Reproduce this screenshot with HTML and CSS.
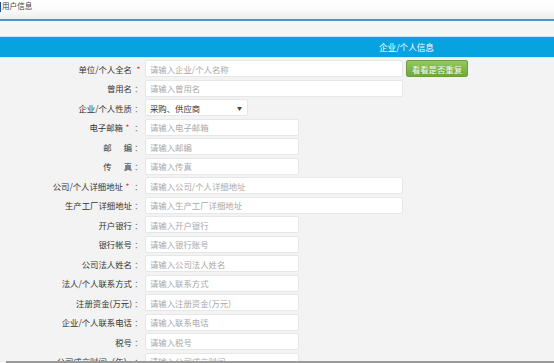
FILE: index.html
```html
<!DOCTYPE html>
<html lang="zh-CN">
<head>
<meta charset="utf-8">
<title>用户信息</title>
<link rel="stylesheet" href="styles.css">
</head>
<body>
<div class="topbar"><span class="caret"></span><span class="page-title">用户信息</span></div>
<div class="gap-strip"></div>
<div class="section-head"><span>企业/个人信息</span></div>
<form class="form">
  <div class="row"><label class="lbl">单位/个人全名<span class="star">*</span></label><input class="ipt long" placeholder="请输入企业/个人名称"><button type="button" class="btn-check">看看是否重复</button></div>
  <div class="row"><label class="lbl">曾用名<span class="colon">：</span></label><input class="ipt long" placeholder="请输入曾用名"></div>
  <div class="row"><label class="lbl">企业/个人性质<span class="colon">：</span></label><div class="select"><span>采购、供应商</span><span class="arrow">▼</span></div></div>
  <div class="row"><label class="lbl">电子邮箱<span class="star">*</span><span class="colon">：</span></label><input class="ipt short" placeholder="请输入电子邮箱"></div>
  <div class="row"><label class="lbl">邮<span class="sp"></span>编<span class="colon">：</span></label><input class="ipt short" placeholder="请输入邮编"></div>
  <div class="row"><label class="lbl">传<span class="sp"></span>真<span class="colon">：</span></label><input class="ipt short" placeholder="请输入传真"></div>
  <div class="row"><label class="lbl">公司/个人详细地址<span class="star">*</span><span class="colon">：</span></label><input class="ipt long" placeholder="请输入公司/个人详细地址"></div>
  <div class="row"><label class="lbl">生产工厂详细地址<span class="colon">：</span></label><input class="ipt long" placeholder="请输入生产工厂详细地址"></div>
  <div class="row"><label class="lbl">开户银行<span class="colon">：</span></label><input class="ipt short" placeholder="请输入开户银行"></div>
  <div class="row"><label class="lbl">银行帐号<span class="colon">：</span></label><input class="ipt short" placeholder="请输入银行账号"></div>
  <div class="row"><label class="lbl">公司法人姓名<span class="colon">：</span></label><input class="ipt short" placeholder="请输入公司法人姓名"></div>
  <div class="row"><label class="lbl">法人/个人联系方式<span class="colon">：</span></label><input class="ipt short" placeholder="请输入联系方式"></div>
  <div class="row"><label class="lbl">注册资金(万元)<span class="colon">：</span></label><input class="ipt short" placeholder="请输入注册资金(万元)"></div>
  <div class="row"><label class="lbl">企业/个人联系电话<span class="colon">：</span></label><input class="ipt short" placeholder="请输入联系电话"></div>
  <div class="row"><label class="lbl">税号<span class="colon">：</span></label><input class="ipt short" placeholder="请输入税号"></div>
  <div class="row"><label class="lbl">公司成立时间（年）<span class="colon">：</span></label><input class="ipt short" placeholder="请输入公司成立时间"></div>
</form>
<div class="hscroll"></div>
</body>
</html>
```
FILE: styles.css
```css
html, body {
  margin: 0;
  padding: 0;
  overflow: hidden;
  background: #f3f3f3;
  font-family: "Noto Sans CJK SC", "Liberation Sans", sans-serif;
  font-size: 8.4px;
  color: #333;
}
.topbar {
  height: 19px;
  background: linear-gradient(#ffffff, #fbfbfb 50%, #ececec);
  border-bottom: 2px solid #4a98c8;
  display: flex;
  align-items: flex-start;
  box-sizing: border-box;
  height: 21px;
}
.caret {
  width: 1px;
  height: 10px;
  margin-top: 2px;
  background: #1d4f8c;
}
.page-title {
  font-size: 7.6px;
  color: #444;
  margin-left: 1px;
  margin-top: 1px;
  line-height: 10px;
}
.gap-strip {
  height: 15px;
  background: #f4f5f5;
  border-bottom: 1px solid #c3eef9;
}
.section-head {
  height: 20px;
  background: #06a3e0;
  border-bottom: 1px solid #bdeefa;
  display: flex;
  align-items: center;
  padding-left: 379px;
  color: #ffffff;
  font-size: 8.6px;
}
.form {
  margin: 0;
  padding-top: 1px;
}
.row {
  height: 19.5px;
  display: flex;
  align-items: center;
}
.lbl {
  width: 141px;
  flex: none;
  text-align: right;
  padding-right: 4px;
  box-sizing: border-box;
  white-space: nowrap;
  color: #333;
  padding-right: 0;
  width: 145px;
}
.star {
  color: #e03a3a;
  display: inline-block;
  width: 9px;
  text-align: center;
}
.colon {
  display: inline-block;
  width: 13px;
  text-align: center;
  color: #777;
}
.row:first-child .star {
  width: 13px;
}
.sp {
  display: inline-block;
  width: 12px;
}
.ipt {
  height: 17px;
  box-sizing: border-box;
  border: 1px solid #e7e7e7;
  border-radius: 2px;
  background: #ffffff;
  padding: 0 4px;
  font-family: inherit;
  font-size: 8.4px;
  color: #333;
  outline: none;
  margin: 0;
}
.ipt::placeholder {
  color: #a9a9a9;
}
.long { width: 258px; }
.short { width: 154px; }
.select {
  width: 103px;
  height: 17px;
  box-sizing: border-box;
  border: 1px solid #e7e7e7;
  border-radius: 2px;
  background: #ffffff;
  display: flex;
  align-items: center;
  justify-content: space-between;
  padding: 0 5px 0 4px;
  color: #333;
}
.arrow {
  font-size: 5px;
  color: #444;
}
.btn-check {
  margin-left: 3px;
  width: 62px;
  height: 17px;
  border: 1px solid #6a9f3c;
  border-radius: 2px;
  background: linear-gradient(#93c95c, #6fa93a);
  color: #ffffff;
  font-family: inherit;
  font-size: 8.4px;
  padding: 0;
  text-shadow: 0 0 1px rgba(0,0,0,0.2);
}
.hscroll {
  position: fixed;
  left: 6px;
  right: 0;
  bottom: 0;
  height: 2px;
  background: #9a9a9a;
}
```
